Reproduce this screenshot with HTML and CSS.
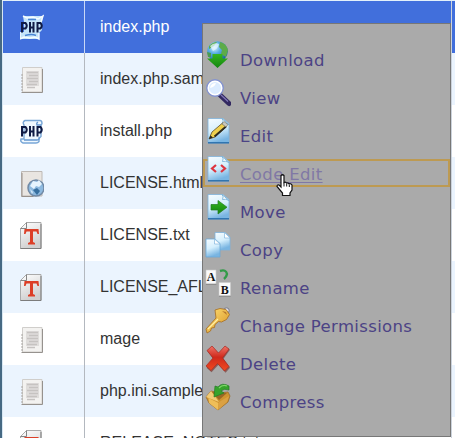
FILE: index.html
```
<!DOCTYPE html>
<html lang="en">
<head>
<meta charset="utf-8">
<title>File manager</title>
<link rel="stylesheet" href="styles.css">
</head>
<body>
<svg class="defs" aria-hidden="true">
  <defs>
    <linearGradient id="paper" x1="0" y1="0" x2="0.3" y2="1"><stop offset="0" stop-color="#f7fcff"/><stop offset=".55" stop-color="#d5effd"/><stop offset="1" stop-color="#79b5e2"/></linearGradient>
    <linearGradient id="grey" x1="0" y1="0" x2="0.4" y2="1"><stop offset="0" stop-color="#fff"/><stop offset="1" stop-color="#cfcfcf"/></linearGradient>
    <radialGradient id="ball" cx=".35" cy=".3" r=".75"><stop offset="0" stop-color="#e2f6ff"/><stop offset=".4" stop-color="#58aee3"/><stop offset="1" stop-color="#175d9c"/></radialGradient>
    <linearGradient id="green" x1="0" y1="0" x2="0" y2="1"><stop offset="0" stop-color="#35b51e"/><stop offset="1" stop-color="#138510"/></linearGradient>
    <linearGradient id="red" x1="0" y1="0" x2="0" y2="1"><stop offset="0" stop-color="#ee7468"/><stop offset=".45" stop-color="#cf291b"/><stop offset="1" stop-color="#f04b20"/></linearGradient>
    <linearGradient id="gold" x1="0" y1="0" x2="1" y2="1"><stop offset="0" stop-color="#ffe27a"/><stop offset="1" stop-color="#d8921f"/></linearGradient>
    <symbol id="doc" viewBox="0 0 24 28">
      <path d="M2.500 1.500H22V26H2.500z" fill="#f3f2f0" stroke="#d0cecb"/>
      <path d="M1.500 26.500H22.500V3" fill="none" stroke="#96928e"/>
      <path d="M2 8v18" stroke="#aaa7a4" stroke-dasharray="2 1"/>
      <path d="M6 5h13v15H6z" fill="#dfdddb"/>
      <path d="M7 6.500h11M9 9.500h9M7 12.500h11M9 15.500h9M7 18.500h10M7 21.500h8" stroke="#c6c3c1" stroke-width="1.300"/>
    </symbol>
    <symbol id="php-letters" viewBox="0 0 24 28">
      <path d="M2 18.500V9H5.500q2.500 2.800 0 5.500H2M10 8V18.500M13.500 8V18.500M10 13.500h3.500M17.500 18.500V9h3q2.500 2.800 0 5.500h-3" fill="none" stroke="#101b45" stroke-width="2"/>
    </symbol>
    <symbol id="php" viewBox="0 0 24 28">
      <path d="M5 2.500h15q2 0 2 3l-1 2v11l-2 2v3q-1 1.500-3 1.500H3q-3-1-2-4h3V7q-2-3 1-4.500z" fill="#eff8ff" stroke="#79a7d7" stroke-width="1.400"/>
      <path d="M4 22h13q3 0 2-3M18 4q-2 1-1 3h4" fill="none" stroke="#6597d0" stroke-width="1.300"/>
      <use href="#php-letters"/>
    </symbol>
    <symbol id="php-selected" viewBox="0 0 24 28">
      <path d="M3 2h20l-1 6v8l-3 3v6H0v-7h4V8z" fill="#c5e5fa"/>
      <path d="M3 2l4 2 6-1 5 2 5-3-2 6M0 25l4-2 6 1 5-1 4 2v-6M0 18v7" fill="none" stroke="#f5fcff" stroke-width="1.400"/>
      <path d="M8 5.500h8M5 21.500q7-2 11 0" fill="none" stroke="#4b86d3" stroke-width="1.400"/>
      <use href="#php-letters"/>
    </symbol>
    <symbol id="htm" viewBox="0 0 24 28">
      <path d="M1.500 1.500H22V26H1.500z" fill="#e9e5e1" stroke="#bdb8b4"/>
      <path d="M2 26.500V3M1.500 26.500h12" stroke="#99918b" fill="none"/>
      <circle cx="16" cy="18" r="8" fill="#8db9df" stroke="#7189a5" stroke-width="1.500"/>
      <path d="M10 16l3-5 4 1 2-2 3 4-3 3-3-1-2 3z" fill="#e6f4fe"/><path d="M13 20l4-2 3 3-3 4z" fill="#376f9f"/><path d="M10 19l3 3-1 2z" fill="#d8ebfa"/>
    </symbol>
    <symbol id="txt" viewBox="0 0 24 28">
      <path d="M6.500 .5H21V26.500H.500V6.500z" fill="url(#grey)" stroke="#aaa"/>
      <path d="M.500 6.500h6v-6M21 2v24.500H.500" fill="none" stroke="#777" stroke-width=".9"/>
      <path d="M4.500 7h14l.5 5h-1.500l-1-2.500H13V20l2 1v1.500H8V21l2-1V9.500H6.500l-1 2.500H4z" fill="#dc3e26"/>
    </symbol>
    <symbol id="page" viewBox="0 0 26 28">
      <path d="M3 1.500h15l6 5V26H3z" fill="url(#paper)" stroke="#7fb3dc" stroke-width=".8"/>
      <path d="M3 25.800h21" stroke="#236aa8" stroke-width="1.300"/>
      <path d="M17 1.500q2 2 .5 5 3-1 6.500 1z" fill="#fff" stroke="#7cb3d8" stroke-width=".9"/>
    </symbol>
    <symbol id="m-download" viewBox="0 0 26 28">
      <circle cx="12.500" cy="10.500" r="10.300" fill="url(#ball)"/>
      <path d="M15 1q6 1 8 8l-2 7-5-3 1-4-3-3zM4 5q4-4 8-4L9 5 4 8z" fill="#5cab49"/>
      <path d="M2 11l4 1v4H3z" fill="#4a9c50"/>
      <path d="M5 5q4-4 9-2-1 5-6 7z" fill="#e4f6ff" opacity=".75"/>
      <path d="M7.500 13h10v4.500h5.500L12.500 27 2 17.500h5.500z" fill="url(#green)"/>
    </symbol>
    <symbol id="m-view" viewBox="0 0 26 28">
      <path d="M15 16l9 8.500" stroke="#322860" stroke-width="5" stroke-linecap="round"/><path d="M16 16l7 6.500" stroke="#8178b8" stroke-width="1.200"/>
      <circle cx="10" cy="9" r="8" fill="#dcecff" stroke="#8393d1" stroke-width="1.800"/><circle cx="10" cy="9" r="6.800" fill="none" stroke="#fff" stroke-width="1.500"/><path d="M5 9q1-5 6-5-1 4-6 5z" fill="#fff"/>
    </symbol>
    <symbol id="m-edit" viewBox="0 0 26 28">
      <use href="#page"/>
      <path d="M4 22l3-7L17.500 6l4 3.500L10 20z" fill="#efd04d" stroke="#5a4a23" stroke-width=".8"/><path d="M9.500 19.500L21 9.500" stroke="#2b2a20" stroke-width="1.800"/><path d="M4 22l1.500-3.500L8 20.500z" fill="#25221d"/><path d="M17 7l2-2.500 4 3-2 2.500z" fill="#c9c8bd" stroke="#6d6c62" stroke-width=".6"/>
    </symbol>
    <symbol id="m-code" viewBox="0 0 26 28">
      <use href="#page"/><path d="M11 10L7 13.500l4 3.500M16 10l4 3.500-4 3.500" fill="none" stroke="#dd3540" stroke-width="2.200"/>
    </symbol>
    <symbol id="m-move" viewBox="0 0 26 28">
      <use href="#page"/><path d="M6 11.500h7V7.500l9 6.700-9 6.800v-4H6z" fill="url(#green)" stroke="#237b1e" stroke-width=".7"/>
    </symbol>
    <symbol id="m-copy" viewBox="0 0 26 28">
      <path d="M10 1.500h10l5 4.500v13H10z" fill="url(#paper)" stroke="#7fb3dc" stroke-width=".8"/><path d="M19.500 1.500V7H25z" fill="#fff" stroke="#84b6dc" stroke-width=".7"/>
      <path d="M1 8h9l5 4.500V26H1z" fill="url(#paper)" stroke="#6ba8d8" stroke-width=".8"/><path d="M9.500 8v5H15z" fill="#fff" stroke="#84b6dc" stroke-width=".7"/>
    </symbol>
    <symbol id="m-rename" viewBox="0 0 26 28">
      <path d="M1 1h10v14H1zM14 13.500h11.500V27H14z" fill="#fafafa" stroke="#c9c9c9" stroke-width=".6"/><path d="M1 15.300h10.300M14 27.200h11.700" stroke="#777" stroke-width=".8"/>
      <text class="letter" x="6" y="12" text-anchor="middle">A</text><text class="letter" x="19.700" y="25" text-anchor="middle">B</text>
      <path d="M15 2q6-2 7 3-.5 3-3 5" fill="none" stroke="#329b48" stroke-width="2.400"/>
    </symbol>
    <symbol id="m-key" viewBox="0 0 26 28">
      <circle cx="21.500" cy="3.500" r="2.700" fill="#dedee5" stroke="#777b8c"/>
      <path d="M10 3l5-1.500 6 1 3.500 5-3 5-5 2.500-3-.500-3.500 3-.500 3-3 .500-1 3L2 26l-1-4L11 11z" fill="url(#gold)" stroke="#a66c20" stroke-width=".8"/><path d="M3 22l10-10" stroke="#ffefa2" stroke-width="1.300"/><path d="M17 4l4 1 1 3z" fill="#b7792d"/>
    </symbol>
    <symbol id="m-delete" viewBox="0 0 26 28">
      <path d="M2 5.500L7 1l6.500 7L20 1l4.500 3-6.500 9 6.500 9-4.500 5-7-8-7 7.500-5-4.500 7-8.500z" fill="#722b27" transform="translate(.5 .7)" opacity=".6"/>
      <path d="M2 5.500L7 1l6.500 7L20 1l4 3-6.500 9 6.500 8.500-4.500 4.500-7-7.500L6 25.500l-5-4.500 7-8z" fill="url(#red)" stroke="#a92820" stroke-width=".7"/>
    </symbol>
    <symbol id="m-compress" viewBox="0 0 26 28">
      <path d="M1 14l5-6 9 2 8-1 2 4-2 6-10 8L4 20z" fill="#cf932f" stroke="#966624" stroke-width=".7"/><path d="M3.500 15l10 5-.5 7-9-7z" fill="#efbe58"/><path d="M1 14l5-6 3 4 5 7z" fill="#f1cb75"/><path d="M14 19l10-6-2 6-9 8z" fill="#dba143"/><path d="M7 9l7 8 8-7z" fill="#9a6825"/>
      <path d="M24 3Q17-1 13 4L10 3l-1 11 10-4-3-2q3-3 8-1z" fill="#36a32c" stroke="#237c25" stroke-width=".7"/><path d="M14 5q4-4 8-2" stroke="#7ed768" stroke-width="1.200" fill="none"/>
    </symbol>
  </defs>
</svg>
<main class="window">
  <div class="files">
    <div class="row selected"><span class="kind"><svg><use href="#php-selected"/></svg></span><span class="name">index.php</span><span class="edge"></span></div>
    <div class="row shade"><span class="kind"><svg><use href="#doc"/></svg></span><span class="name">index.php.sample</span><span class="edge"></span></div>
    <div class="row"><span class="kind"><svg><use href="#php"/></svg></span><span class="name">install.php</span><span class="edge"></span></div>
    <div class="row shade"><span class="kind"><svg><use href="#htm"/></svg></span><span class="name">LICENSE.html</span><span class="edge"></span></div>
    <div class="row"><span class="kind"><svg><use href="#txt"/></svg></span><span class="name">LICENSE.txt</span><span class="edge"></span></div>
    <div class="row shade"><span class="kind"><svg><use href="#txt"/></svg></span><span class="name">LICENSE_AFL.txt</span><span class="edge"></span></div>
    <div class="row"><span class="kind"><svg><use href="#doc"/></svg></span><span class="name">mage</span><span class="edge"></span></div>
    <div class="row shade"><span class="kind"><svg><use href="#doc"/></svg></span><span class="name">php.ini.sample</span><span class="edge"></span></div>
    <div class="row"><span class="kind"><svg><use href="#txt"/></svg></span><span class="name">RELEASE_NOTES.txt</span><span class="edge"></span></div>
  </div>
  <nav class="menu">
    <a class="item"><svg><use href="#m-download"/></svg><span>Download</span></a>
    <a class="item"><svg><use href="#m-view"/></svg><span>View</span></a>
    <a class="item"><svg><use href="#m-edit"/></svg><span>Edit</span></a>
    <a class="item active"><svg><use href="#m-code"/></svg><span>Code Edit</span></a>
    <a class="item"><svg><use href="#m-move"/></svg><span>Move</span></a>
    <a class="item"><svg><use href="#m-copy"/></svg><span>Copy</span></a>
    <a class="item"><svg><use href="#m-rename"/></svg><span>Rename</span></a>
    <a class="item"><svg><use href="#m-key"/></svg><span>Change Permissions</span></a>
    <a class="item"><svg><use href="#m-delete"/></svg><span>Delete</span></a>
    <a class="item"><svg><use href="#m-compress"/></svg><span>Compress</span></a>
  </nav>
  <svg class="pointer" viewBox="0 0 18 23"><path d="M5 1.500q1.500-1.500 3 0v7q1.500-1 2.500.5 1.500-.5 2.500.8 2-.5 3 1.200v5l-2 3v2.500H6.500V19L1 12.500q0-2 2-1.500l2 2z" fill="#fff" stroke="#111" stroke-width="1.200"/><path d="M8 8.500v4M10.700 9.500v3M13.300 10.500v2.500" stroke="#111"/></svg>
</main>
</body>
</html>
```
FILE: styles.css
```
body { margin: 0; background: #fff; }
.defs { position: absolute; width: 0; height: 0; }
.window {
  position: relative;
  box-sizing: border-box;
  width: 455px;
  height: 438px;
  overflow: hidden;
  border-left: 2px solid #466983;
  padding-top: 1px;
  background: #e3f1fa;
}
.files { border-left: 1px solid #d7e7f3; }
.row {
  display: grid;
  grid-template-columns: 82px 1fr 4px;
  height: 52px;
  background: #fff;
  color: #333;
  font: 16px/52px "Liberation Sans", Arial, sans-serif;
}
.shade { background: #ebf4fe; }
.selected { background: #416fdc; color: #fff; }
.kind { border-right: 1px solid #b3b8bf; padding: 13px 0 0 17px; }
.kind svg { display: block; width: 24px; height: 28px; }
.selected .kind { border-color: #c9d8f6; }
.name { padding-left: 15px; white-space: nowrap; overflow: hidden; }
.edge { border-left: 1px solid #ccd3dc; }
.menu {
  position: absolute;
  left: 200px;
  top: 23px;
  box-sizing: border-box;
  width: 249px;
  height: 414px;
  padding-top: 21px;
  border: 1px solid #777;
  background: #aaa;
  display: flex;
  flex-direction: column;
  gap: 10px;
}
.item {
  display: flex;
  box-sizing: border-box;
  height: 28px;
  border: 2px solid transparent;
  color: #4c4385;
  font: 16.5px/28px "DejaVu Sans", Verdana, sans-serif;
  letter-spacing: 0.35px;
}
.item svg { flex: none; width: 26px; height: 28px; margin: -6px 9px 0 0; }
.active { border-color: #bd9a52; color: #8078a5; }
.active span { text-decoration: underline; text-decoration-thickness: 1px; text-underline-offset: 2px; }
.letter { font: bold 12px "Liberation Serif", serif; letter-spacing: 0; fill: #111; }
.pointer { position: absolute; left: 274px; top: 174px; width: 18px; height: 23px; }
```
